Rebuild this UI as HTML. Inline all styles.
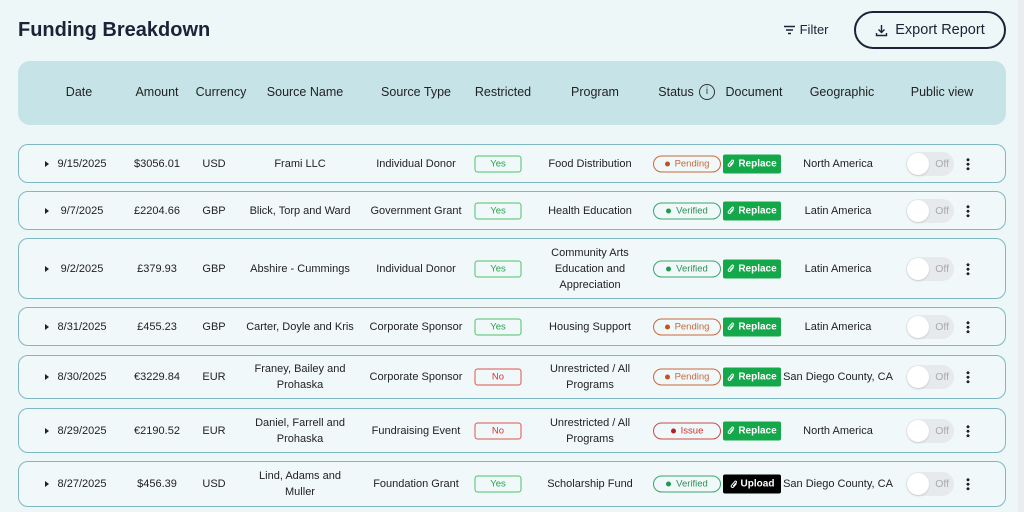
<!DOCTYPE html><html><head><meta charset="utf-8"><style>
*{box-sizing:border-box;margin:0;padding:0}
body{width:1024px;height:512px;overflow:hidden;background:#eef7f8;font-family:"Liberation Sans",sans-serif;color:#1f2937;position:relative}
.t{position:absolute;left:18px;top:19px;font-size:20px;font-weight:bold;color:#1c2238}
.filter{position:absolute;left:783px;top:22px;font-size:13px;color:#1c2238}
.exp{position:absolute;left:854px;top:11px;width:152px;height:38px;border:2px solid #1c2238;border-radius:19px;font-size:14.5px;color:#1c2238;display:flex;align-items:center;justify-content:center;gap:7px}
.hd{position:absolute;left:18px;top:61px;width:988px;height:64px;background:#c6e3e8;border-radius:12px}
.h{position:absolute;top:85px;font-size:12.5px;color:#222;transform:translateX(-50%);white-space:nowrap}
.row{position:absolute;left:18px;width:988px;border:1.5px solid #7fb8c2;border-radius:10px;background:#f1f8f9}
.c{position:absolute;font-size:11px;color:#222;transform:translate(-50%,-50%);text-align:center;line-height:16px;white-space:nowrap}
.pill{position:absolute;transform:translate(-50%,-50%);height:17px;border-radius:9px;font-size:9.5px;display:flex;align-items:center;justify-content:center;border:1px solid}
.yes{width:47px;border-color:#4cc06a;color:#25a24a;border-radius:3px}
.no{width:47px;border-color:#d9534f;color:#d33;border-radius:3px}
.st{width:68px;gap:5px}
.st i{width:5px;height:5px;border-radius:50%;display:inline-block}
.pen{border-color:#c8683a;color:#c8683a}.pen i{background:#c0541f}
.ver{border-color:#3aa56a;color:#2e8f58}.ver i{background:#1f9a50}
.iss{border-color:#c94a4a;color:#c33}.iss i{background:#b82020}
.doc{position:absolute;transform:translate(-50%,-50%);width:58px;height:19px;border-radius:2px;background:#15a84a;color:#fff;font-size:10px;font-weight:bold;display:flex;align-items:center;justify-content:center;gap:3px}
.up{background:#000}
.tg{position:absolute;transform:translate(-50%,-50%);width:48px;height:24px;border-radius:12px;background:#e6eaec}
.tg b{position:absolute;left:1px;top:1px;width:22px;height:22px;border-radius:50%;background:#fff;box-shadow:0 1px 2px #0002}
.tg span{position:absolute;right:5px;top:6px;font-size:10.5px;color:#aaa}
.k{position:absolute;transform:translate(-50%,-50%);width:3px;height:13px;background:radial-gradient(circle,#222 1.4px,transparent 1.6px) 0 0/3px 4.5px}
.ar{position:absolute;transform:translate(-50%,-50%);width:0;height:0;border-left:4px solid #222;border-top:3.5px solid transparent;border-bottom:3.5px solid transparent}
.sb{position:absolute;left:1018px;top:0;width:6px;height:512px;background:#e9edef}
</style></head><body>
<div class="t">Funding Breakdown</div>
<div class="filter"><svg width="13" height="10" style="vertical-align:-1px"><path d="M1 1.5h11M3 5h7M5 8.5h3" stroke="#1c2238" stroke-width="1.4"/></svg> Filter</div>
<div class="exp"><svg width="13" height="13"><path d="M6.5 1v7M3.5 5.5l3 3 3-3M1.5 9v2.5h10V9" stroke="#1c2238" stroke-width="1.4" fill="none"/></svg>Export Report</div>
<div class="hd"></div>
<div class="h" style="left:79px">Date</div><div class="h" style="left:157px">Amount</div><div class="h" style="left:221px">Currency</div><div class="h" style="left:305px">Source Name</div><div class="h" style="left:416px">Source Type</div><div class="h" style="left:503px">Restricted</div><div class="h" style="left:595px">Program</div><div class="h" style="left:676px">Status</div>
<div style="position:absolute;left:699px;top:84px;width:16px;height:16px;border:1.2px solid #333;border-radius:50%;font-size:10px;text-align:center;line-height:14px;color:#333">i</div>
<div class="h" style="left:754px">Document</div><div class="h" style="left:842px">Geographic</div><div class="h" style="left:942px">Public view</div>
<div class="sb"></div>
<div id="rows"></div>
<script>
const R=[[144,183,"9/15/2025","$3056.01","USD","Frami LLC","Individual Donor",1,"Food Distribution","pen",0,"North America"],
[191,230,"9/7/2025","£2204.66","GBP","Blick, Torp and Ward","Government Grant",1,"Health Education","ver",0,"Latin America"],
[238,299,"9/2/2025","£379.93","GBP","Abshire - Cummings","Individual Donor",1,"Community Arts<br>Education and<br>Appreciation","ver",0,"Latin America"],
[307,346,"8/31/2025","£455.23","GBP","Carter, Doyle and Kris","Corporate Sponsor",1,"Housing Support","pen",0,"Latin America"],
[355,399,"8/30/2025","€3229.84","EUR","Franey, Bailey and<br>Prohaska","Corporate Sponsor",0,"Unrestricted / All<br>Programs","pen",0,"San Diego County, CA"],
[408,453,"8/29/2025","€2190.52","EUR","Daniel, Farrell and<br>Prohaska","Fundraising Event",0,"Unrestricted / All<br>Programs","iss",0,"North America"],
[461,507,"8/27/2025","$456.39","USD","Lind, Adams and<br>Muller","Foundation Grant",1,"Scholarship Fund","ver",1,"San Diego County, CA"]];
const N={pen:"Pending",ver:"Verified",iss:"Issue"};
const clip='<svg width="8" height="10" viewBox="0 0 8 10"><path d="M6.5 4L3.5 7.5a1.3 1.3 0 0 1-2-1.7L5 1.8a.9.9 0 0 1 1.4 1.1L3.2 6.5" stroke="#fff" stroke-width="1" fill="none"/></svg>';
let h="";
for(const r of R){const y=(r[0]+r[1])/2;
h+=`<div class="row" style="top:${r[0]}px;height:${r[1]-r[0]}px"></div>`;
const c=(x,t)=>h+=`<div class="c" style="left:${x}px;top:${y}px">${t}</div>`;
h+=`<div class="ar" style="left:47px;top:${y}px"></div>`;
c(82,r[2]);c(157,r[3]);c(214,r[4]);c(300,r[5]);c(416,r[6]);c(590,r[8]);c(838,r[11]);
h+=`<div class="pill ${r[7]?'yes':'no'}" style="left:498px;top:${y}px">${r[7]?'Yes':'No'}</div>`;
h+=`<div class="pill st ${r[9]}" style="left:687px;top:${y}px"><i></i>${N[r[9]]}</div>`;
h+=`<div class="doc ${r[10]?'up':''}" style="left:752px;top:${y}px">${clip}${r[10]?'Upload':'Replace'}</div>`;
h+=`<div class="tg" style="left:930px;top:${y}px"><b></b><span>Off</span></div>`;
h+=`<div class="k" style="left:968px;top:${y}px"></div>`;}
document.getElementById("rows").innerHTML=h;
</script>
</body></html>
